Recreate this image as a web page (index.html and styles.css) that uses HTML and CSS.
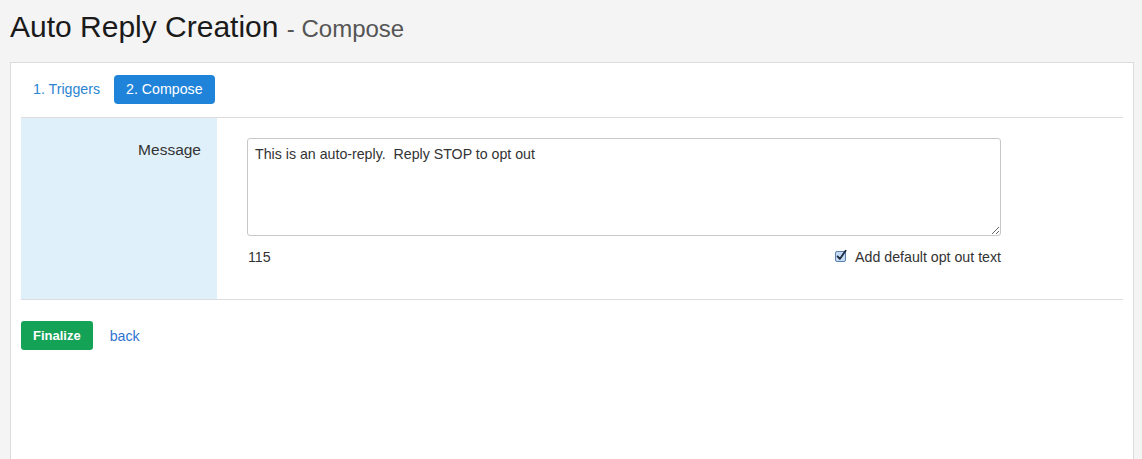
FILE: index.html
```html
<!DOCTYPE html>
<html>
<head>
<meta charset="utf-8">
<title>Auto Reply Creation</title>
<link rel="stylesheet" href="styles.css">
</head>
<body>
<header class="page-header">
  <h1 class="title">Auto Reply Creation <small class="subtitle">- Compose</small></h1>
</header>
<main class="panel">
  <nav class="tabs">
    <a class="tab" href="#">1. Triggers</a>
    <a class="tab tab-active" href="#">2. Compose</a>
  </nav>
  <section class="form-row">
    <div class="form-label">Message</div>
    <div class="form-field">
      <textarea class="message-input">This is an auto-reply.  Reply STOP to opt out</textarea>
      <div class="field-meta">
        <span class="char-count">115</span>
        <label class="optout">
          <span class="checkbox">
            <svg width="12" height="12" viewBox="0 0 12 12">
              <rect x="0.5" y="1.5" width="10" height="10" rx="1.5" fill="#c7dbf4" stroke="#5b7fae"/>
              <path d="M2.6 6.4 L4.8 8.9 L10.6 0.8" fill="none" stroke="#1b2b44" stroke-width="1.8" stroke-linecap="round" stroke-linejoin="round"/>
            </svg>
          </span>
          Add default opt out text
        </label>
      </div>
    </div>
  </section>
  <footer class="actions">
    <button class="btn-finalize" type="button">Finalize</button>
    <a class="back-link" href="#">back</a>
  </footer>
</main>
</body>
</html>
```

FILE: styles.css
```css
* {
  box-sizing: border-box;
}

html, body {
  height: 100%;
}

body {
  margin: 0;
  background: #f4f4f4;
  font-family: "Liberation Sans", Arial, Helvetica, sans-serif;
  font-size: 14.2px;
  color: #333;
  display: flex;
  flex-direction: column;
}

.page-header {
  padding: 10px 10px 0 10px;
  margin-bottom: 16px;
}

.title {
  margin: 0;
  font-size: 30px;
  font-weight: normal;
  line-height: 34px;
  color: #1a1a1a;
}

.subtitle {
  font-size: 24px;
  color: #555;
}

.panel {
  flex: 1;
  margin: 0 8px 0 10px;
  background: #fff;
  border: 1px solid #dcdcdc;
  border-bottom: none;
  padding: 0 10px;
}

.tabs {
  display: flex;
  gap: 2px;
  padding-top: 12px;
  padding-bottom: 13px;
  border-bottom: 1px solid #dddddd;
}

.tab {
  display: block;
  padding: 0 12px;
  height: 29px;
  line-height: 29px;
  font-size: 14.2px;
  color: #2a84d2;
  text-decoration: none;
  border-radius: 4px;
}

.tab-active {
  background: #1f84d9;
  color: #fff;
}

.form-row {
  display: flex;
  border-bottom: 1px solid #dddddd;
}

.form-label {
  width: 196px;
  flex: none;
  background: #e0f0fa;
  text-align: right;
  padding: 22px 16px 0 0;
  font-size: 15.5px;
  line-height: 20px;
  color: #333;
}

.form-field {
  padding: 20px 0 32px 30px;
}

.message-input {
  display: block;
  width: 754px;
  height: 98px;
  margin: 0;
  padding: 5px 7px;
  border: 1px solid #c8c8c8;
  border-radius: 3px;
  font-family: "Liberation Sans", Arial, Helvetica, sans-serif;
  font-size: 14.2px;
  line-height: 20px;
  color: #333;
  background: #fff;
  resize: both;
}

.field-meta {
  display: flex;
  justify-content: space-between;
  align-items: center;
  margin-top: 11px;
  line-height: 20px;
  color: #333;
}

.char-count {
  padding-left: 1px;
}

.optout {
  display: flex;
  align-items: center;
  gap: 8px;
}

.checkbox {
  display: block;
  width: 12px;
  height: 12px;
  margin-top: -2px;
}

.checkbox svg {
  display: block;
  overflow: visible;
}

.actions {
  display: flex;
  align-items: center;
  padding-top: 21px;
}

.btn-finalize {
  height: 29px;
  padding: 0 12px;
  border: none;
  border-radius: 3px;
  background: #14a257;
  color: #fff;
  font-family: "Liberation Sans", Arial, Helvetica, sans-serif;
  font-size: 13px;
  font-weight: bold;
  line-height: 29px;
}

.back-link {
  margin-left: 17px;
  font-size: 14.2px;
  color: #2f73cf;
  text-decoration: none;
}
```
